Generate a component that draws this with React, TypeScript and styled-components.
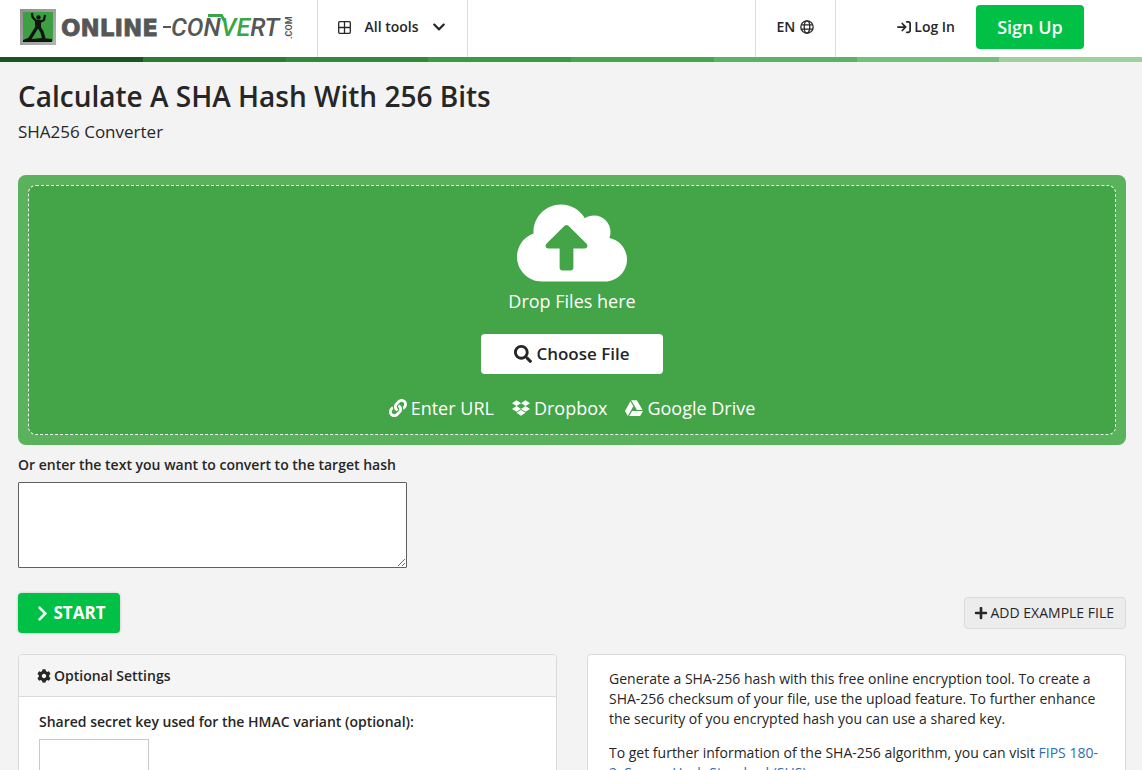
import React from "react";
import styled, { createGlobalStyle } from "styled-components";
import { FaChevronDown, FaChevronRight, FaCog, FaDropbox, FaGoogleDrive, FaLink, FaPlus, FaSearch, FaCloudUploadAlt } from "react-icons/fa";
import { FaArrowRightToBracket } from "react-icons/fa6";

const GlobalStyle = createGlobalStyle`
  *, *::before, *::after { box-sizing: border-box; }
  html { background: #f3f3f3; scrollbar-width: none; }
  body {
    margin: 0;
    color: #262626;
    font-family: "Open Sans", sans-serif;
    font-size: 14px;
    line-height: 20px;
  }
  svg { display: block; flex-shrink: 0; }
  button, input, textarea { font: inherit; color: inherit; }
  button { cursor: pointer; }
`;

const Header = styled.header`
  display: flex;
  height: 57px;
  background: #fff;
`;

const Brand = styled.a`
  display: flex;
  align-items: center;
  width: 318px;
  padding: 0 0 3px 18px;
  border-right: 1px solid #dcdcdc;
`;

const NavButton = styled.button<{ $width: number; $gap: number }>`
  display: flex;
  align-items: center;
  justify-content: center;
  gap: ${(p) => p.$gap}px;
  width: ${(p) => p.$width}px;
  padding: 0 1px 3px 0;
  border: 0;
  border-right: 1px solid #dcdcdc;
  background: none;
  font-weight: 600;
`;

const Spacer = styled.div`
  flex: 1;
  border-right: 1px solid #dcdcdc;
`;

const Account = styled.div`
  display: flex;
  align-items: center;
  gap: 21px;
  padding: 0 58px 3px 61px;
`;

const LoginLink = styled.a`
  display: flex;
  align-items: center;
  gap: 3px;
  color: inherit;
  font-weight: 600;
  text-decoration: none;
`;

const SignUp = styled.button`
  width: 108px;
  height: 44px;
  padding: 0;
  border: 0;
  border-radius: 4px;
  background: #00c045;
  color: #fff;
  font-size: 18px;
  font-weight: 600;
`;

const Stripe = styled.div`
  display: grid;
  grid-template-columns: repeat(8, 1fr);
  height: 5px;
`;

const StripePart = styled.span<{ $color: string }>`
  background: ${(p) => p.$color};
`;

const Main = styled.main`
  padding: 17px 16px 20px 18px;
`;

const Title = styled.h1`
  margin: 0;
  font-size: 28px;
  font-weight: 600;
  line-height: 34px;
`;

const Subtitle = styled.h2`
  margin: 6px 0 30px;
  font-size: 17px;
  font-weight: 400;
  line-height: 26px;
`;

const DropFrame = styled.section`
  padding: 10px;
  border-radius: 8px;
  background: #5ab25d;
`;

const DropZone = styled.div`
  display: flex;
  flex-direction: column;
  align-items: center;
  padding: 13px 0 14px;
  border: 1px dashed #fff;
  border-radius: 8px;
  background: #43a547;
  color: #fff;
  font-size: 18px;
`;

const UploadIcon = styled(FaCloudUploadAlt)`
  width: 110px;
  height: 88px;
`;

const DropLabel = styled.p`
  margin: 2px 0 21px;
  line-height: 24px;
`;

const ChooseFile = styled.button`
  display: flex;
  align-items: center;
  justify-content: center;
  gap: 4px;
  width: 182px;
  height: 40px;
  padding: 0;
  border: 0;
  border-radius: 4px;
  background: #fff;
  color: #262626;
  font-size: 17px;
  font-weight: 600;
`;

const Sources = styled.div`
  display: flex;
  gap: 18px;
  margin-top: 22px;
`;

const SourceLink = styled.a`
  display: flex;
  align-items: center;
  gap: 4px;
  color: inherit;
  line-height: 24px;
  text-decoration: none;
`;

const FieldLabel = styled.label`
  display: block;
  font-weight: 600;
`;

const HashLabel = styled(FieldLabel)`
  margin: 10px 0 7px;
`;

const HashText = styled.textarea`
  display: block;
  width: 389px;
  height: 86px;
  border: 1px solid #606060;
  border-radius: 1px;
  background: #fff;
`;

const Actions = styled.div`
  display: flex;
  align-items: center;
  justify-content: space-between;
  margin: 25px 0 21px;
`;

const StartButton = styled.button`
  display: flex;
  align-items: center;
  justify-content: center;
  gap: 2px;
  width: 102px;
  height: 40px;
  padding: 0 0 0 2px;
  border: 0;
  border-radius: 4px;
  background: #00c045;
  box-shadow: 0 0 3px rgba(0, 0, 0, 0.2);
  color: #fff;
  font-size: 17px;
  font-weight: 700;
`;

const ExampleButton = styled.button`
  display: flex;
  align-items: center;
  gap: 3px;
  height: 32px;
  padding: 0 11px 0 9px;
  border: 1px solid #dadada;
  border-radius: 4px;
  background: #ececec;
`;

const Panels = styled.div`
  display: grid;
  grid-template-columns: 1fr 1fr;
  gap: 30px;
`;

const Panel = styled.section`
  border: 1px solid #d9dbdb;
  border-radius: 4px;
  background: #fff;
  overflow: hidden;
`;

const PanelHeading = styled.h3`
  display: flex;
  align-items: center;
  gap: 3px;
  height: 42px;
  margin: 0;
  padding: 0 18px;
  border-bottom: 1px solid #d9dbdb;
  background: #f5f5f5;
  font-size: 14px;
  font-weight: 600;
`;

const PanelBody = styled.div`
  padding: 15px 20px 20px;
`;

const KeyInput = styled.input`
  display: block;
  width: 110px;
  height: 40px;
  margin-top: 7px;
  border: 1px solid #c8cac9;
  background: #fff;
`;

const Info = styled(Panel)`
  padding: 14px 21px;
`;

const Paragraph = styled.p`
  margin: 0 0 14px;
`;

const InlineLink = styled.a`
  color: #2e6db4;
  text-decoration: none;
`;

const stripeColors = ["#1b5420", "#2b7b32", "#328a39", "#3b9942", "#45a649", "#5bb261", "#72c17a", "#a0d19d"];

function Logo() {
  return (
    <svg width="278" height="38" viewBox="0 0 278 38" role="img" aria-label="Online-Convert.com">
      <defs>
        <linearGradient id="frame" x1="0" y1="0" x2="1" y2="1">
          <stop offset="0" stopColor="#8d908e" />
          <stop offset="1" stopColor="#b2b2b2" />
        </linearGradient>
      </defs>
      <rect x="2" y="1" width="36" height="36" fill="url(#frame)" />
      <rect x="5" y="4" width="30" height="29" fill="#3c9f42" />
      <g fill="none" stroke="#101510" strokeLinejoin="round">
        <path d="M14 5 14.500 9 18 13M27 7 26 12 22 14" strokeWidth="2.200" />
        <path d="M20 12V20" strokeWidth="6" />
        <path d="M19 19 16 24 11 32M21 19 24 24 26 31" strokeWidth="3.400" />
      </g>
      <circle cx="20.500" cy="9.500" r="2.200" fill="#101510" />
      <path d="M5 32 10 30 14 31 24 30 34 31V34H5Z" fill="#101510" />
      <g fill="#555756">
        <text x="43" y="28" fontFamily="DejaVu Sans, sans-serif" fontWeight="700" fontSize="23" stroke="#555756" strokeWidth="0.8">ONLINE</text>
        <rect x="145" y="18" width="8" height="2" />
        <text x="153" y="28" fontFamily="Roboto, sans-serif" fontStyle="italic" fontWeight="500" fontSize="25">
          CON<tspan fill="#3aa745">VE</tspan>RT
        </text>
        <text transform="translate(274 31) rotate(-90)" fontFamily="Roboto, sans-serif" fontWeight="700" fontSize="9">.COM</text>
      </g>
      <path d="M190 7.500H203.500L206.500 13" fill="none" stroke="#3aa745" strokeWidth="3" />
    </svg>
  );
}

function GridIcon() {
  return (
    <svg width="13" height="13" viewBox="0 0 13 13" fill="none" stroke="#262626" strokeWidth="1.3" aria-hidden="true">
      <rect x=".7" y=".7" width="11.6" height="11.6" rx="1" />
      <path d="M6.5 1V12M1 6.5H12" />
    </svg>
  );
}

function GlobeIcon() {
  return (
    <svg width="14" height="14" viewBox="0 0 14 14" fill="none" stroke="#262626" strokeWidth="1.3" aria-hidden="true">
      <circle cx="7" cy="7" r="6.2" />
      <ellipse cx="7" cy="7" rx="2.8" ry="6.2" />
      <path d="M1.300 4.900H12.700M1.300 9.100H12.700" />
    </svg>
  );
}

export default function App() {
  return (
    <>
      <GlobalStyle />
      <Header>
        <Brand href="#"><Logo /></Brand>
        <NavButton $width={150} $gap={13}>
          <GridIcon />
          All tools
          <FaChevronDown size={14} />
        </NavButton>
        <Spacer />
        <NavButton $width={80} $gap={5}>
          EN <GlobeIcon />
        </NavButton>
        <Account>
          <LoginLink href="#"><FaArrowRightToBracket size={14} />Log In</LoginLink>
          <SignUp>Sign Up</SignUp>
        </Account>
      </Header>
      <Stripe>{stripeColors.map((c) => <StripePart key={c} $color={c} />)}</Stripe>
      <Main>
        <Title>Calculate A SHA Hash With 256 Bits</Title>
        <Subtitle>SHA256 Converter</Subtitle>
        <DropFrame>
          <DropZone>
            <UploadIcon />
            <DropLabel>Drop Files here</DropLabel>
            <ChooseFile><FaSearch size={18} />Choose File</ChooseFile>
            <Sources>
              <SourceLink href="#"><FaLink size={18} />Enter URL</SourceLink>
              <SourceLink href="#"><FaDropbox size={18} />Dropbox</SourceLink>
              <SourceLink href="#"><FaGoogleDrive size={18} />Google Drive</SourceLink>
            </Sources>
          </DropZone>
        </DropFrame>
        <HashLabel htmlFor="hash-text">Or enter the text you want to convert to the target hash</HashLabel>
        <HashText id="hash-text" />
        <Actions>
          <StartButton><FaChevronRight size={17} />START</StartButton>
          <ExampleButton><FaPlus size={14} />ADD EXAMPLE FILE</ExampleButton>
        </Actions>
        <Panels>
          <Panel>
            <PanelHeading><FaCog size={14} />Optional Settings</PanelHeading>
            <PanelBody>
              <FieldLabel htmlFor="secret">Shared secret key used for the HMAC variant (optional):</FieldLabel>
              <KeyInput id="secret" type="text" />
            </PanelBody>
          </Panel>
          <Info>
            <Paragraph>
              Generate a SHA-256 hash with this free online encryption tool. To create a SHA-256 checksum of your file,
              use the upload feature. To further enhance the security of you encrypted hash you can use a shared key.
            </Paragraph>
            <Paragraph>
              To get further information of the SHA-256 algorithm, you can visit{" "}
              <InlineLink href="#">FIPS 180-2: Secure Hash Standard (SHS)</InlineLink>.
            </Paragraph>
          </Info>
        </Panels>
      </Main>
    </>
  );
}
